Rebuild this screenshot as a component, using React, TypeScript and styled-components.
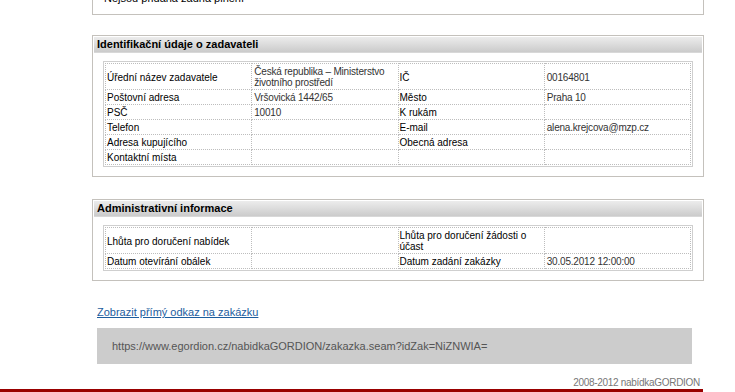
import styled, { createGlobalStyle } from 'styled-components';

const GlobalStyle = createGlobalStyle`
  html, body {
    margin: 0;
    padding: 0;
    background: #fff;
    overflow: hidden;
  }
  body {
    font-family: "Liberation Sans", Arial, sans-serif;
    color: #000;
  }
`;

const Page = styled.div`
  width: 703px;
  margin-top: -10px;
`;

const Main = styled.div`
  padding-left: 92px;
  width: 612px;
`;

const Box = styled.div<{ $top?: boolean }>`
  border: 1px solid #c4c1bc;
  border-top: ${p => (p.$top ? 'none' : '1px solid #c4c1bc')};
  padding: 1px 1px 9px;
  margin-bottom: ${p => (p.$top ? '20px' : '22px')};
`;

const TopNote = styled.div`
  font-size: 11px;
  line-height: 14px;
  padding: 0 10px;
  height: 14px;
`;

const TitleBar = styled.div`
  height: 15px;
  line-height: 15px;
  background: linear-gradient(#ececec, #cbcbcb);
  border-bottom: 1px solid #d8d8d8;
  font-size: 11px;
  font-weight: bold;
  padding-left: 3px;
  margin-bottom: 8px;
`;

const TableFrame = styled.div`
  margin: 0 9px;
  border: 1px solid #cfcfcf;
  padding: 1px;
`;

const Table = styled.table`
  width: 100%;
  table-layout: fixed;
  border-collapse: collapse;
`;

const Cell = styled.td<{ $label?: boolean }>`
  border: 1px dotted #bdbdbd;
  padding: ${p => (p.$label ? '2px 2px 1px 1px' : '2px 2px 1px 2px')};
  font-size: 10px;
  letter-spacing: ${p => (p.$label ? '0' : '-0.2px')};
  line-height: 11px;
  height: 11px;
  vertical-align: middle;
  color: ${p => (p.$label ? '#000' : '#333')};
`;

const LinkRow = styled.div`
  padding: 1px 0 0 5px;
  line-height: 13px;
`;

const DirectLink = styled.a`
  font-size: 11px;
  color: #1c5d9e;
  text-decoration: underline;
`;

const UrlBox = styled.div`
  margin: 9px 12px 0 5px;
  height: 36px;
  background: #cccccc;
  display: flex;
  align-items: center;
  padding-left: 15px;
  font-size: 11px;
  color: #555;
`;

const Footer = styled.div`
  margin-top: 13px;
  text-align: right;
  padding-right: 3px;
  font-size: 10px;
  letter-spacing: -0.3px;
  color: #777;
  line-height: 12px;
`;

const RedLine = styled.div`
  margin-top: 0;
  height: 3px;
  background: #990000;
`;

type Row = [React.ReactNode, React.ReactNode, React.ReactNode, React.ReactNode];

const zadavatel: Row[] = [
  [
    'Úřední název zadavatele',
    <>Česká republika – Ministerstvo<br />životního prostředí</>,
    'IČ',
    '00164801',
  ],
  ['Poštovní adresa', 'Vršovická 1442/65', 'Město', 'Praha 10'],
  ['PSČ', '10010', 'K rukám', ''],
  ['Telefon', '', 'E-mail', 'alena.krejcova@mzp.cz'],
  ['Adresa kupujícího', '', 'Obecná adresa', ''],
  ['Kontaktní místa', '', '', ''],
];

const admin: Row[] = [
  [
    'Lhůta pro doručení nabídek',
    '',
    <>Lhůta pro doručení žádosti o<br />účast</>,
    '',
  ],
  ['Datum otevírání obálek', '', 'Datum zadání zakázky', '30.05.2012 12:00:00'],
];

const InfoTable = ({ rows }: { rows: Row[] }) => (
  <TableFrame>
    <Table>
      <tbody>
        {rows.map((r, i) => (
          <tr key={i}>
            <Cell $label>{r[0]}</Cell>
            <Cell>{r[1]}</Cell>
            <Cell $label>{r[2]}</Cell>
            <Cell>{r[3]}</Cell>
          </tr>
        ))}
      </tbody>
    </Table>
  </TableFrame>
);

export default function App() {
  return (
    <Page>
      <GlobalStyle />
      <Main>
        <Box $top>
          <TopNote>Nejsou přidaná žádná plnění</TopNote>
        </Box>
        <Box>
          <TitleBar>Identifikační údaje o zadavateli</TitleBar>
          <InfoTable rows={zadavatel} />
        </Box>
        <Box>
          <TitleBar>Administrativní informace</TitleBar>
          <InfoTable rows={admin} />
        </Box>
        <LinkRow>
          <DirectLink href="#">Zobrazit přímý odkaz na zakázku</DirectLink>
        </LinkRow>
        <UrlBox>https://www.egordion.cz/nabidkaGORDION/zakazka.seam?idZak=NiZNWIA=</UrlBox>
      </Main>
      <Footer>2008-2012 nabídkaGORDION</Footer>
      <RedLine />
    </Page>
  );
}
